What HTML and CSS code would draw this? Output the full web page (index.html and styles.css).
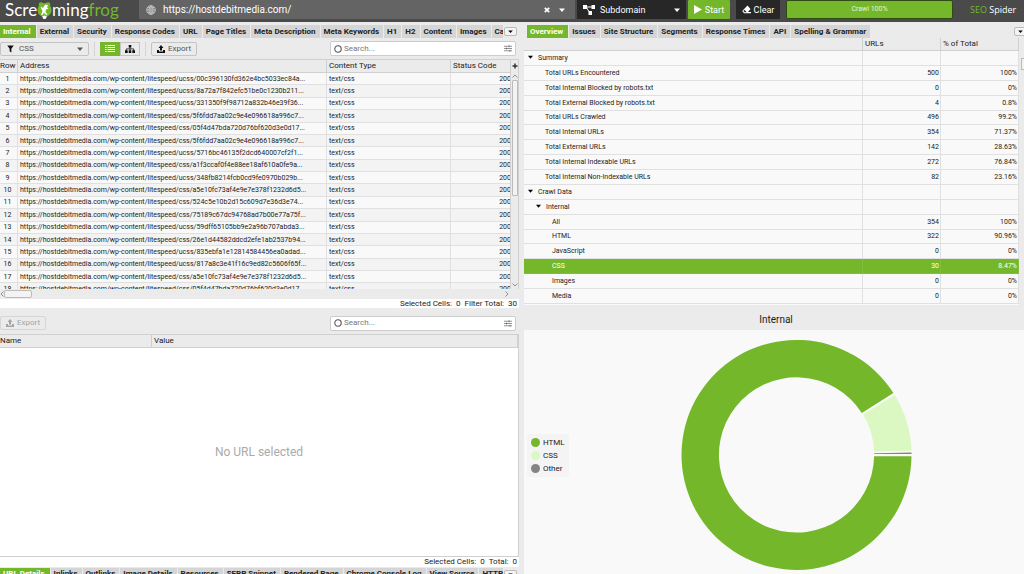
FILE: index.html
```html
<!DOCTYPE html>
<html lang="en">
<head>
<meta charset="utf-8">
<title>Screaming Frog SEO Spider</title>
<link rel="stylesheet" href="styles.css">
</head>
<body>
<svg class="defs" aria-hidden="true">
  <symbol id="caret" viewBox="0 0 6 4"><path d="M0 .5h6L3 4z" fill="currentColor"/></symbol>
  <symbol id="upload" viewBox="0 0 16 16"><path d="M8 0l5 6h-3v5H6V6H3zM0 10h4v3h8v-3h4v6H0z" fill="currentColor"/></symbol>
  <symbol id="sliders" viewBox="0 0 16 14"><path d="M0 2.500h16M0 7h16M0 11.500h16M10 .5v4M5 5v4M12 9.500v4" fill="none" stroke="currentColor" stroke-width="1.300"/></symbol>
  <symbol id="ring" viewBox="0 0 8 8"><circle cx="4" cy="4" r="3.200" fill="none" stroke="currentColor" stroke-width="1.100"/></symbol>
</svg>
<header class="topbar">
  <div class="logo"><span>Scre</span><svg class="frog" viewBox="0 0 15 18"><circle cx="7.500" cy="9" r="7" fill="#74b72b"/><circle cx="4" cy="3.500" r="2.300" fill="#74b72b"/><circle cx="11" cy="3.500" r="2.300" fill="#74b72b"/><path d="M3.500 5.500l2.500 1.500 1.500-2.500 1.500-1 2 1-1 2 1.500 1-2.500 1-.5 2.500 2 2.500-1.500.5L7 11.500 5.500 14l-1.500-.5 1.500-3L4.500 8z" fill="#fff"/><path d="M5 15.500l2.500-1 2.500 1L8.500 18h-2z" fill="#fff"/></svg><span>ming</span><span class="logo-frog">frog</span></div>
  <div class="urlbar">
    <svg class="globe" viewBox="0 0 10 10"><g fill="none" stroke="#c8c8c8" stroke-width=".9"><circle cx="5" cy="5" r="4.300"/><ellipse cx="5" cy="5" rx="2" ry="4.300"/><path d="M5 .7v8.600M.7 5h8.600M1.300 2.800h7.400M1.300 7.200h7.400"/></g></svg>
    <input class="url-input" aria-label="URL to spider" value="https://hostdebitmedia.com/">
    <button class="plain" aria-label="Clear URL"><svg class="cross" viewBox="0 0 6 6"><path d="M.8.8l4.400 4.400M5.200.8L.8 5.200" stroke="#fff" stroke-width="1.700"/></svg></button>
    <button class="plain" aria-label="Recent URLs"><svg class="caret"><use href="#caret"/></svg></button>
  </div>
  <label class="mode"><svg class="mode-icon" viewBox="0 0 12 10"><path d="M2 2h8M3 2l4 6" stroke="#fff" stroke-width="1"/><path d="M0 0h4v4H0zM8.500 0H12v4H8.500zM5.500 6H9v4H5.500z" fill="#fff"/></svg>
    <select aria-label="Crawl mode"><option>Subdomain</option></select><svg class="caret"><use href="#caret"/></svg></label>
  <button class="start"><svg viewBox="0 0 8 9"><path d="M0 0l8 4.500L0 9z" fill="#fff"/></svg>Start</button>
  <button class="clear"><svg viewBox="0 0 9 9"><path d="M5.500.5L8.500 4 6 7H9v1.200H2L.2 6z" fill="#fff"/><path d="M2.300 4.800l2.500 2.400H2.700L1.300 6z" fill="#272727"/></svg>Clear</button>
  <div class="progress" role="progressbar" aria-valuenow="100">Crawl 100%</div>
  <div class="brand"><span>SEO</span> Spider</div>
</header>
<main class="panes">
  <section class="left">
    <nav class="tabs">
      <div class="tab-strip"><button class="tab active">Internal</button><button class="tab">External</button><button class="tab">Security</button><button class="tab">Response Codes</button><button class="tab">URL</button><button class="tab">Page Titles</button><button class="tab">Meta Description</button><button class="tab">Meta Keywords</button><button class="tab">H1</button><button class="tab">H2</button><button class="tab">Content</button><button class="tab">Images</button><button class="tab">Canonicals</button></div>
      <button class="more" aria-label="More tabs"><svg class="caret"><use href="#caret"/></svg></button>
    </nav>
    <div class="toolbar">
      <label class="filter"><svg class="funnel" viewBox="0 0 8 8"><path d="M.3 0h7.400L5 3.600V8L3 6.700V3.600z" fill="#111"/></svg>
        <select aria-label="Filter"><option>CSS</option></select><svg class="caret"><use href="#caret"/></svg></label>
      <div class="views">
        <button class="view on" aria-label="List view"><svg viewBox="0 0 10 8"><path d="M0 .5h1.500M0 2.500h1.500M0 4.500h1.500M0 6.500h1.500M2.500 .5H10M2.500 2.500H10M2.500 4.500H10M2.500 6.500H10" stroke="#fff" stroke-width="1"/></svg></button><button class="view" aria-label="Tree view"><svg viewBox="0 0 10 8"><path d="M3.700 0h2.600v2.600H3.700zM0 5.200h2.700V8H0zM3.700 5.200h2.600V8H3.700zM7.300 5.200H10V8H7.300z" fill="#111"/><path d="M5 2v3.500M1.300 5.500V3.900h7.400v1.600" fill="none" stroke="#111" stroke-width=".8"/></svg></button>
      </div>
      <button class="export"><svg><use href="#upload"/></svg>Export</button>
      <label class="search"><svg class="ring"><use href="#ring"/></svg><input aria-label="Search table" placeholder="Search..."><svg class="sliders"><use href="#sliders"/></svg></label>
    </div>
    <div class="list">
      <div class="list-main">
        <div class="clip head-clip"><table class="grid">
          <colgroup><col class="c-row"><col><col class="c-type"><col class="c-status"></colgroup>
          <thead><tr><th>Row</th><th>Address</th><th>Content Type</th><th>Status Code</th></tr></thead>
        </table></div>
        <div class="clip body-clip"><table class="grid rows" aria-label="Internal URLs">
          <colgroup><col class="c-row"><col><col class="c-type"><col class="c-status"></colgroup>
          <tbody>
          <tr><td>1</td><td>https://hostdebitmedia.com/wp-content/litespeed/ucss/00c396130fd362e4bc5033ec84a...</td><td>text/css</td><td>200</td></tr>
          <tr><td>2</td><td>https://hostdebitmedia.com/wp-content/litespeed/ucss/8a72a7f842efc51be0c1230b211...</td><td>text/css</td><td>200</td></tr>
          <tr><td>3</td><td>https://hostdebitmedia.com/wp-content/litespeed/ucss/331350f9f98712a832b46e39f36...</td><td>text/css</td><td>200</td></tr>
          <tr><td>4</td><td>https://hostdebitmedia.com/wp-content/litespeed/css/5f6fdd7aa02c9e4e096618a996c7...</td><td>text/css</td><td>200</td></tr>
          <tr><td>5</td><td>https://hostdebitmedia.com/wp-content/litespeed/css/05f4d47bda720d76bf620d3e0d17...</td><td>text/css</td><td>200</td></tr>
          <tr><td>6</td><td>https://hostdebitmedia.com/wp-content/litespeed/css/5f6fdd7aa02c9e4e096618a996c7...</td><td>text/css</td><td>200</td></tr>
          <tr><td>7</td><td>https://hostdebitmedia.com/wp-content/litespeed/ucss/5716bc46135f2dcd640007cf2f1...</td><td>text/css</td><td>200</td></tr>
          <tr><td>8</td><td>https://hostdebitmedia.com/wp-content/litespeed/css/a1f3ccaf0f4e88ee18af610a0fe9a...</td><td>text/css</td><td>200</td></tr>
          <tr><td>9</td><td>https://hostdebitmedia.com/wp-content/litespeed/ucss/348fb8214fcb0cd9fe0970b029b...</td><td>text/css</td><td>200</td></tr>
          <tr><td>10</td><td>https://hostdebitmedia.com/wp-content/litespeed/css/a5e10fc73af4e9e7e378f1232d6d5...</td><td>text/css</td><td>200</td></tr>
          <tr><td>11</td><td>https://hostdebitmedia.com/wp-content/litespeed/css/524c5e10b2d15c609d7e36d3e74...</td><td>text/css</td><td>200</td></tr>
          <tr><td>12</td><td>https://hostdebitmedia.com/wp-content/litespeed/css/75189c67dc94768ad7b00e77a75f...</td><td>text/css</td><td>200</td></tr>
          <tr><td>13</td><td>https://hostdebitmedia.com/wp-content/litespeed/ucss/59dff65105bb9e2a96b707abda3...</td><td>text/css</td><td>200</td></tr>
          <tr><td>14</td><td>https://hostdebitmedia.com/wp-content/litespeed/css/26e1d44582ddcd2efe1ab2537b94...</td><td>text/css</td><td>200</td></tr>
          <tr><td>15</td><td>https://hostdebitmedia.com/wp-content/litespeed/ucss/835ebfa1e12814584456ea0adad...</td><td>text/css</td><td>200</td></tr>
          <tr><td>16</td><td>https://hostdebitmedia.com/wp-content/litespeed/ucss/817a8c3e41f16c9ed82c5606f65f...</td><td>text/css</td><td>200</td></tr>
          <tr><td>17</td><td>https://hostdebitmedia.com/wp-content/litespeed/css/a5e10fc73af4e9e7e378f1232d6d5...</td><td>text/css</td><td>200</td></tr>
          <tr><td>18</td><td>https://hostdebitmedia.com/wp-content/litespeed/css/05f4d47bda720d76bf620d3e0d17...</td><td>text/css</td><td>200</td></tr>
          </tbody>
        </table></div>
      </div>
      <div class="vscroll">
        <button class="plus" aria-label="Add column"><svg viewBox="0 0 6 6"><path d="M3 .5v5M.5 3h5" stroke="#333" stroke-width="1.500"/></svg></button>
        <svg class="chev" viewBox="0 0 6 4"><path d="M.5 3.500L3 1l2.500 2.500" fill="none" stroke="#777" stroke-width=".8"/></svg>
        <div class="vthumb"></div>
        <svg class="chev" viewBox="0 0 6 4"><path d="M.5.5L3 3 5.500.5" fill="none" stroke="#777" stroke-width=".8"/></svg>
      </div>
    </div>
    <div class="hscroll">
      <svg class="hchev" viewBox="0 0 4 6"><path d="M3.500.5L1 3l2.500 2.500" fill="none" stroke="#777" stroke-width=".8"/></svg>
      <div class="hthumb"></div>
      <svg class="hchev end" viewBox="0 0 4 6"><path d="M.5.5L3 3 .5 5.500" fill="none" stroke="#777" stroke-width=".8"/></svg>
    </div>
    <div class="status"><span>Selected Cells:&nbsp; 0</span><span>Filter Total:&nbsp; 30</span></div>
    <div class="toolbar lower">
      <button class="export" disabled><svg><use href="#upload"/></svg>Export</button>
      <label class="search"><svg class="ring"><use href="#ring"/></svg><input aria-label="Search details" placeholder="Search..."><svg class="sliders"><use href="#sliders"/></svg></label>
    </div>
    <div class="details">
      <table class="grid detail-head"><colgroup><col class="c-name"><col></colgroup><thead><tr><th>Name</th><th>Value</th></tr></thead></table>
      <p class="empty">No URL selected</p>
    </div>
    <div class="status lower-status"><span>Selected Cells:&nbsp; 0</span><span>Total:&nbsp; 0</span></div>
    <nav class="tabs bottom">
      <div class="tab-strip"><button class="tab active">URL Details</button><button class="tab">Inlinks</button><button class="tab">Outlinks</button><button class="tab">Image Details</button><button class="tab">Resources</button><button class="tab">SERP Snippet</button><button class="tab">Rendered Page</button><button class="tab">Chrome Console Log</button><button class="tab">View Source</button><button class="tab">HTTP Headers</button></div>
      <button class="more" aria-label="More tabs"><svg class="caret"><use href="#caret"/></svg></button>
    </nav>
  </section>
  <section class="right">
    <nav class="tabs">
      <div class="tab-strip"><button class="tab active">Overview</button><button class="tab">Issues</button><button class="tab">Site Structure</button><button class="tab">Segments</button><button class="tab">Response Times</button><button class="tab">API</button><button class="tab">Spelling &amp; Grammar</button></div>
      <button class="more" aria-label="More tabs"><svg class="caret"><use href="#caret"/></svg></button>
    </nav>
    <div class="overview">
      <div class="clip over-main">
        <table class="grid">
          <colgroup><col><col class="c-num"><col class="c-num"></colgroup>
          <thead><tr><th></th><th>URLs</th><th>% of Total</th></tr></thead>
        </table>
        <table class="grid tree" aria-label="Overview">
          <colgroup><col><col class="c-num"><col class="c-num"></colgroup>
          <tbody>
          <tr><td><svg class="caret"><use href="#caret"/></svg>Summary</td><td></td><td></td></tr>
          <tr><td class="l1">Total URLs Encountered</td><td>500</td><td>100%</td></tr>
          <tr><td class="l1">Total Internal Blocked by robots.txt</td><td>0</td><td>0%</td></tr>
          <tr><td class="l1">Total External Blocked by robots.txt</td><td>4</td><td>0.8%</td></tr>
          <tr><td class="l1">Total URLs Crawled</td><td>496</td><td>99.2%</td></tr>
          <tr><td class="l1">Total Internal URLs</td><td>354</td><td>71.37%</td></tr>
          <tr><td class="l1">Total External URLs</td><td>142</td><td>28.63%</td></tr>
          <tr><td class="l1">Total Internal Indexable URLs</td><td>272</td><td>76.84%</td></tr>
          <tr><td class="l1">Total Internal Non-Indexable URLs</td><td>82</td><td>23.16%</td></tr>
          <tr><td><svg class="caret"><use href="#caret"/></svg>Crawl Data</td><td></td><td></td></tr>
          <tr><td class="sub"><svg class="caret"><use href="#caret"/></svg>Internal</td><td></td><td></td></tr>
          <tr><td class="l2">All</td><td>354</td><td>100%</td></tr>
          <tr><td class="l2">HTML</td><td>322</td><td>90.96%</td></tr>
          <tr><td class="l2">JavaScript</td><td>0</td><td>0%</td></tr>
          <tr class="picked"><td class="l2">CSS</td><td>30</td><td>8.47%</td></tr>
          <tr><td class="l2">Images</td><td>0</td><td>0%</td></tr>
          <tr><td class="l2">Media</td><td>0</td><td>0%</td></tr>
          </tbody>
        </table>
      </div>
      <div class="over-scroll"><div class="over-thumb"></div></div>
    </div>
    <h2 class="chart-title">Internal</h2>
    <div class="chart">
      <ul class="legend"><li><i class="dot html"></i>HTML</li><li><i class="dot css"></i>CSS</li><li><i class="dot other"></i>Other</li></ul>
      <svg class="donut" viewBox="-116 -116 232 232" role="img" aria-label="Internal URLs by type">
        <path d="M115 1.200A115 115 0 1 1 96.900-62L65.300-42A77.600 77.600 0 1 0 77.600 1.200z" fill="#74b72b"/>
        <path d="M98.200-60A115 115 0 0 1 115-4.300L77.600-3.500A77.600 77.600 0 0 0 66.700-40.500z" fill="#dcf8c2"/>
        <path d="M115-2.500V-1L77.600-1V-1.700z" fill="#858585"/>
      </svg>
    </div>
  </section>
</main>
</body>
</html>
```
FILE: styles.css
```css
* { box-sizing: border-box; }
html, body { height: 100%; }
body {
  margin: 0;
  display: flex;
  flex-direction: column;
  overflow: hidden;
  background: #ebebeb;
  color: #222;
  font: 8px/12px Roboto, "Liberation Sans", sans-serif;
}
button, input, select { font: inherit; color: inherit; margin: 0; padding: 0; border: 0; background: none; }
select { appearance: none; min-width: 0; flex: 1; }
input { min-width: 0; outline: 0; }
svg { display: block; flex: none; }
.defs { display: none; }
.caret { width: 6px; height: 4px; }

/* Top bar */
.topbar { display: flex; height: 22px; flex: none; background: #4a4a4a; padding-bottom: 3px; color: #fff; font-size: 10px; }
.logo { display: flex; align-items: center; width: 139px; padding-left: 5px; font: 17px/18px Lato, sans-serif; }
.frog { width: 15px; height: 18px; }
.logo-frog { color: #74b72b; }
.urlbar { display: flex; align-items: center; flex: 1; gap: 9px; padding: 0 10px 0 7px; background: #646464; }
.globe { width: 10px; height: 10px; }
.url-input { flex: 1; height: 18px; margin-left: -2px; }
.cross { width: 6px; height: 6px; }
.mode { display: flex; align-items: center; gap: 5px; width: 109px; margin-left: 2px; padding: 0 6px; background: #272727; font-size: 9px; }
.mode-icon { width: 12px; height: 10px; }
.start, .clear { display: flex; align-items: center; justify-content: center; gap: 3px; font-size: 9px; border-radius: 1px; }
.start { width: 42px; margin-left: 2px; background: #74b72b; }
.start svg { width: 8px; height: 9px; }
.clear { width: 44px; margin-left: 6px; background: #272727; }
.clear svg { width: 9px; height: 9px; }
.progress { width: 167px; margin-left: 6px; border: 1px solid #2f4a12; border-radius: 2px; background: #74b72b; color: #e4f4d3; font-size: 7px; line-height: 17px; text-align: center; }
.brand { width: 71px; padding-left: 17px; font: 9px/20px "Open Sans", sans-serif; white-space: nowrap; }
.brand span { color: #74b72b; }

/* Panes */
.panes { flex: 1; min-height: 0; display: grid; grid-template-columns: 519fr 500fr; gap: 5px; padding-top: 2px; }
.left, .right { display: flex; flex-direction: column; min-width: 0; min-height: 0; }
.tabs { display: flex; align-items: center; flex: none; height: 14px; }
.tab-strip { display: flex; gap: 1px; flex: 1; min-width: 0; overflow: hidden; }
.tab { flex: none; height: 13px; padding: 0 4px 0 3px; background: #d5d5d5; font-weight: 700; line-height: 13px; white-space: nowrap; }
.tab.active { padding-right: 5px; background: #74b72b; color: #fff; }
.right .tab.active { margin-left: 3px; }
.more { display: flex; align-items: center; justify-content: center; width: 13px; height: 9px; margin: 0 2px 0 1px; border: 1px solid #bbb; border-radius: 2px; background: #f4f4f4; color: #000; }
.right .more { margin-right: -3px; }
.more .caret { width: 5px; height: 3px; }

.toolbar { display: flex; align-items: center; flex: none; height: 21px; padding-right: 3px; color: #555; }
.filter { display: flex; align-items: center; gap: 5px; width: 89px; height: 14px; padding: 0 5px 0 6px; border: 1px solid #c4c4c4; border-radius: 2px; }
.funnel { width: 7px; height: 8px; }
.views { display: flex; margin-left: 5px; padding: 0 5px; border: solid #d4d4d4; border-width: 0 1px; }
.view { display: flex; align-items: center; justify-content: center; width: 20px; height: 14px; border: 1px solid #c4c4c4; }
.view svg { width: 10px; height: 8px; }
.view.on { background: #74b72b; border-color: #74b72b; }
.export { display: flex; align-items: center; justify-content: center; gap: 3px; width: 46px; height: 14px; margin-left: 5px; border: 1px solid #c4c4c4; border-radius: 2px; font-size: 8px; }
.export svg { width: 8px; height: 8px; color: #111; }
.export:disabled { margin-left: 0; border-color: #d6d6d6; color: #a5a5a5; }
.export:disabled svg { color: #a5a5a5; }
.search { display: flex; align-items: center; gap: 2px; width: 186px; height: 15px; margin-left: auto; padding: 0 3px; border: 1px solid #ccc; border-radius: 2px; background: #fff; }
.search input { flex: 1; }
.search input::placeholder { color: #777; opacity: 1; }
.ring { width: 8px; height: 8px; color: #555; }
.sliders { width: 8px; height: 7px; color: #555; }

/* Tables */
.grid { width: 100%; table-layout: fixed; border-collapse: separate; border-spacing: 0; }
.grid th, .grid td { padding: 0 1px 0 2px; border-right: 1px solid #e0e0e0; border-bottom: 1px solid #e0e0e0; white-space: nowrap; overflow: hidden; text-align: left; font-weight: 400; }
.grid th { height: 13px; background: #ebebeb; border-color: #d0d0d0; line-height: 12px; }
.grid td { font-size: 7px; line-height: 10px; }
.clip { overflow: hidden; }
.list { display: flex; flex: none; border-top: 1px solid #d0d0d0; }
.list-main { flex: 1; min-width: 0; }
.list .grid { width: calc(100% + 4px); }
.c-row { width: 18px; }
.c-type { width: 124px; }
.c-status { width: 63px; }
.body-clip { height: 216px; }
.rows { height: 223px; background: #f9f9f9; }
.rows tr:nth-child(even) { background: #f3f3f3; }
.list .grid th:first-child { padding: 0; }
.rows td:first-child { padding: 0 2px 0 0; text-align: center; }
.rows td:last-child { padding-right: 2px; text-align: right; }
.vscroll { display: flex; flex-direction: column; align-items: center; width: 9px; border: solid #d0d0d0; border-width: 0 1px; }
.plus { display: flex; align-items: center; height: 12px; margin-bottom: 1px; }
.plus svg { width: 6px; height: 6px; }
.chev { width: 6px; height: 4px; margin: 1px 0 2px; }
.vthumb { width: 6px; height: 116px; margin-bottom: auto; border: 1px solid #bbb; border-radius: 1px; background: #f3f3f3; }
.hscroll { display: flex; align-items: center; flex: none; height: 10px; padding-right: 10px; }
.hchev { width: 4px; height: 6px; }
.hthumb { width: 28px; height: 8px; border: 1px solid #bbb; border-radius: 2px; background: #f3f3f3; }
.hchev.end { margin-left: auto; }
.status { display: flex; justify-content: flex-end; gap: 4px; flex: none; height: 9px; padding-right: 2px; background: #fff; line-height: 9px; }
.lower { height: 26px; padding-top: 4px; }
.details { display: flex; flex-direction: column; flex: 1; min-height: 0; border: 1px solid #d0d0d0; border-left: 0; background: #fff; }
.detail-head th:first-child { padding: 0; }
.c-name { width: 152px; }
.empty { margin: auto; color: #aaa; font-size: 12px; line-height: 16px; }
.lower-status { height: 10px; line-height: 10px; }
.bottom { margin-bottom: -7px; }
.bottom .tab { line-height: 11px; padding-bottom: 2px; }

/* Overview */
.overview { display: flex; flex: none; }
.over-main { flex: 1; min-width: 0; height: 267px; background: #f9f9f9; }
.c-num { width: 78px; }
.tree { height: 253px; }
.tree td:first-child { padding-left: 13px; }
.tree td + td { text-align: right; }
.tree .caret { display: inline-block; width: 5px; height: 4px; margin: 0 5px 1px -9px; color: #000; }
.tree .l1.l1, .tree .sub.sub { padding-left: 21px; }
.tree .l2.l2 { padding-left: 28px; }
.tree .picked td { background: #74b72b; border-color: #7fbe3b; color: #fff; }
.over-scroll { width: 5px; padding: 20px 0 0 2px; }
.over-thumb { width: 3px; height: 12px; border: 1px solid #bbb; border-right: 0; background: #f3f3f3; }
.chart-title { flex: none; height: 25px; margin: 0; padding: 4px 0 0 4px; font-size: 10px; font-weight: 400; line-height: 21px; text-align: center; }
.chart { display: flex; align-items: center; flex: 1; min-height: 0; margin-bottom: -6px; padding-left: 3px; background: #f9f9f9; }
.legend { flex: none; width: 42px; margin: 0; padding: 2px 4px; list-style: none; background: #f4f4f4; border-radius: 2px; line-height: 13px; }
.legend li { display: flex; align-items: center; gap: 3px; }
.dot { width: 9px; height: 9px; border-radius: 50%; }
.html { background: #74b72b; }
.css { background: #dcf8c2; }
.other { background: #858585; }
.donut { flex: 1; height: 232px; min-width: 0; }
```
